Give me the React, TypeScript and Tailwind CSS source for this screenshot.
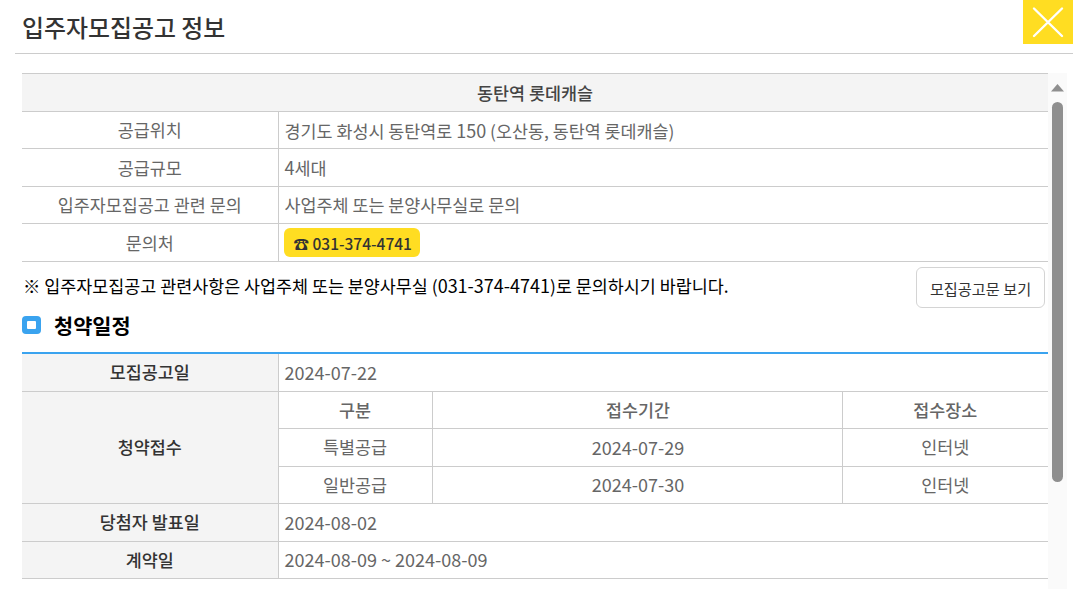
const fam = "font-['Noto_Sans_CJK_KR','Noto_Sans',sans-serif]";

const line = "border-b border-[#cccccc]";
const labelCell = `${line} border-r border-[#cccccc] text-center text-[#666666] font-normal p-0`;
const valueCell = `${line} text-left text-[#666666] pl-[6px] p-0`;
const grayLabel = `${line} border-r border-[#cccccc] bg-[#f4f4f4] text-center text-[#333333] font-medium p-0`;
const centerCell = `${line} text-center text-[#666666] p-0`;

function Num({ children }: { children: React.ReactNode }) {
  return <span className="text-[18px]">{children}</span>;
}

function InfoRow({ label, h, children }: { label: string; h: string; children: React.ReactNode }) {
  return (
    <tr className={h}>
      <th className={labelCell}>{label}</th>
      <td className={valueCell}>{children}</td>
    </tr>
  );
}

export default function App() {
  return (
    <div className={`${fam} w-[1084px] h-[589px] overflow-hidden bg-white text-[17.4px] leading-[24px]`}>
      <div className="ml-[15px] w-[1058px] h-[54px] border-b border-[#cccccc] flex items-start justify-between">
        <h1 className="ml-[7px] mt-[9px] text-[23.9px] leading-[36px] font-medium text-[#333333]">입주자모집공고 정보</h1>
        <button className="w-[50px] h-[44px] bg-[#ffdd22] flex items-center justify-center">
          <svg width="34" height="32" viewBox="0 0 34 32" fill="none" stroke="white" strokeWidth="2.4" strokeLinecap="round">
            <path d="M3 2.5 L31 30 M31 2.5 L3 30" />
          </svg>
        </button>
      </div>
      <div className="flex ml-[22px] mt-[19px] h-[516px]">
        <div className="w-[1026px] shrink-0">
          <table className="w-full table-fixed border-collapse">
            <colgroup>
              <col className="w-[256px]" />
              <col />
            </colgroup>
            <tbody>
              <tr className="h-[38px]">
                <th colSpan={2} className={`${line} border-t bg-[#f4f4f4] text-center font-medium text-[#444444] p-0`}>동탄역 롯데캐슬</th>
              </tr>
              <InfoRow h="h-[37px]" label="공급위치">경기도 화성시 동탄역로 <Num>150</Num> (오산동, 동탄역 롯데캐슬)</InfoRow>
              <InfoRow h="h-[38px]" label="공급규모"><Num>4</Num>세대</InfoRow>
              <InfoRow h="h-[37px]" label="입주자모집공고 관련 문의">사업주체 또는 분양사무실로 문의</InfoRow>
              <InfoRow h="h-[38px]" label="문의처">
                <span className="ml-[-1px] inline-flex items-center h-[29px] pl-[10px] pr-[8px] rounded-[6px] bg-[#ffdd22] text-[#333333] text-[15.5px] font-medium align-middle">☎ 031-374-4741</span>
              </InfoRow>
            </tbody>
          </table>
          <div className="relative flex items-center h-[46px]">
            <p className="ml-[1px] text-black">※ 입주자모집공고 관련사항은 사업주체 또는 분양사무실 (<Num>031-374-4741</Num>)로 문의하시기 바랍니다.</p>
            <button className="absolute right-[3px] top-[5px] w-[129px] h-[41px] border border-[#d4d4d4] rounded-[6px] text-[15.2px] text-[#333333] bg-white">모집공고문 보기</button>
          </div>
          <div className="flex items-center h-[46px] border-b-2 border-[#3aa3ef]">
            <span className="w-[19px] h-[18px] rounded-[4px] bg-[#3aa3ef] flex items-center justify-center mb-[10px]">
              <span className="w-[9px] h-[8px] bg-white rounded-[1px]" />
            </span>
            <h2 className="ml-[13px] mb-[10px] text-[20.8px] font-bold text-black">청약일정</h2>
          </div>
          <table className="w-full table-fixed border-collapse">
            <colgroup>
              <col className="w-[256px]" />
              <col className="w-[154px]" />
              <col className="w-[410px]" />
              <col />
            </colgroup>
            <tbody>
              <tr className="h-[37px]">
                <th className={grayLabel}>모집공고일</th>
                <td colSpan={3} className={valueCell}><Num>2024-07-22</Num></td>
              </tr>
              <tr className="h-[37px]">
                <th rowSpan={3} className={grayLabel}>청약접수</th>
                <td className={`${centerCell} border-r border-[#cccccc] font-medium`}>구분</td>
                <td className={`${centerCell} border-r border-[#cccccc] font-medium pl-[2px]`}>접수기간</td>
                <td className={`${centerCell} font-medium`}>접수장소</td>
              </tr>
              <tr className="h-[38px]">
                <td className={`${centerCell} border-r border-[#cccccc]`}>특별공급</td>
                <td className={`${centerCell} border-r border-[#cccccc] pl-[2px]`}><Num>2024-07-29</Num></td>
                <td className={centerCell}>인터넷</td>
              </tr>
              <tr className="h-[37px]">
                <td className={`${centerCell} border-r border-[#cccccc]`}>일반공급</td>
                <td className={`${centerCell} border-r border-[#cccccc] pl-[2px]`}><Num>2024-07-30</Num></td>
                <td className={centerCell}>인터넷</td>
              </tr>
              <tr className="h-[38px]">
                <th className={grayLabel}>당첨자 발표일</th>
                <td colSpan={3} className={valueCell}><Num>2024-08-02</Num></td>
              </tr>
              <tr className="h-[37px]">
                <th className={grayLabel}>계약일</th>
                <td colSpan={3} className={valueCell}><Num>2024-08-09 ~ 2024-08-09</Num></td>
              </tr>
            </tbody>
          </table>
        </div>
        <div className="w-[19px] shrink-0 bg-[#fafafa] flex flex-col items-center">
          <svg className="mt-[11px] ml-[-1px]" width="13" height="8" viewBox="0 0 13 8"><path d="M6.5 0 L13 7.5 L0 7.5 Z" fill="#8f8f8f" /></svg>
          <div className="mt-[10px] ml-[-1px] w-[11px] h-[380px] rounded-[6px] bg-[#8f8f8f]" />
        </div>
      </div>
    </div>
  );
}
